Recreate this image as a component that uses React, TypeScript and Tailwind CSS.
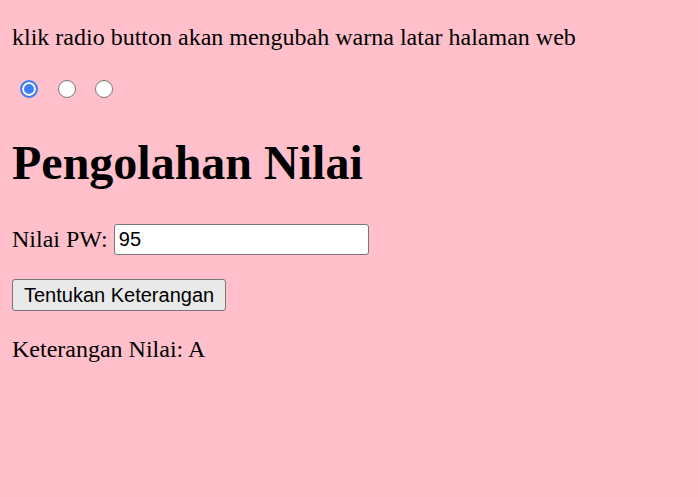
import React, { useState } from 'react';

export default function App() {
  const [nilai, setNilai] = useState('95');
  const [ket, setKet] = useState('A');
  const [bg, setBg] = useState('pink');

  const colors: Record<string, string> = {
    pink: 'bg-[#ffc0cb]',
    yellow: 'bg-[#ffff00]',
    cyan: 'bg-[#00ffff]',
  };

  const hitung = () => {
    const n = Number(nilai);
    if (n >= 85) setKet('A');
    else if (n >= 70) setKet('B');
    else if (n >= 55) setKet('C');
    else if (n >= 40) setKet('D');
    else setKet('E');
  };

  return (
    <div className={`min-h-screen ${colors[bg]} px-[12px] pt-[24px] text-black font-['Liberation_Serif','Times_New_Roman',serif] text-[24px] leading-[1.15]`}>
      <p>klik radio button akan mengubah warna latar halaman web</p>

      <div className="mt-[24px] flex h-[27.6px] items-center">
        {['pink', 'yellow', 'cyan'].map((c) => (
          <input
            key={c}
            type="radio"
            name="warna"
            checked={bg === c}
            onChange={() => setBg(c)}
            className="ml-[8px] mr-[11.5px] h-[18px] w-[18px] appearance-none rounded-full border-[1.5px] border-[#767676] bg-white checked:border-2 checked:border-[#3f7ef8] checked:bg-[#3f7ef8] checked:shadow-[inset_0_0_0_2px_white]"
          />
        ))}
      </div>

      <h1 className="mt-[32px] text-[48px] font-bold leading-[1.15]">Pengolahan Nilai</h1>

      <p className="mt-[32px] flex h-[34px] items-center">
        <span>Nilai PW:</span>
        <input
          type="text"
          value={nilai}
          onChange={(e) => setNilai(e.target.value)}
          className="ml-[6px] h-[31px] w-[255px] rounded-[3px] border border-[#767676] bg-white px-[4px] font-['Liberation_Sans',Arial,sans-serif] text-[20px] leading-none outline-none"
        />
      </p>

      <div className="mt-[23px]">
        <button
          onClick={hitung}
          className="h-[32px] rounded-[3px] border border-[#767676] bg-[#e9e9e9] px-[11px] font-['Liberation_Sans',Arial,sans-serif] text-[20px] leading-none"
        >
          Tentukan Keterangan
        </button>
      </div>

      <p className="mt-[25px]">Keterangan Nilai: {ket}</p>
    </div>
  );
}
